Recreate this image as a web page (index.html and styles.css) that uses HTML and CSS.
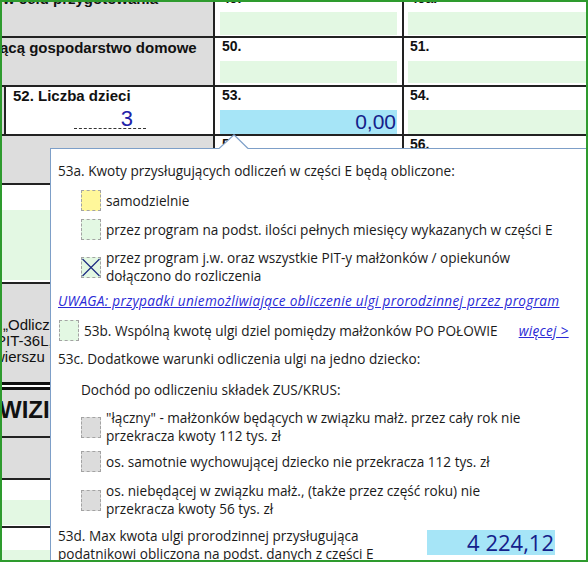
FILE: index.html
```html
<!DOCTYPE html>
<html lang="pl">
<head>
<meta charset="utf-8">
<title>PIT - ulga prorodzinna</title>
<link rel="stylesheet" href="styles.css">
</head>
<body>
<div class="page">
  <div class="sheet">
    <div class="row r1">
      <div class="c1 grey"><span class="lbl lbl-cut">w celu przygotowania</span></div>
      <div class="c2"><span class="num num-cut">49.</span><div class="fld green f1"></div></div>
      <div class="c3"><span class="num num-cut">49a.</span><div class="fld green f1"></div></div>
    </div>
    <div class="row r2">
      <div class="c1 grey"><span class="lbl lbl-2">ącą gospodarstwo domowe</span></div>
      <div class="c2"><span class="num">50.</span><div class="fld green f2"></div></div>
      <div class="c3"><span class="num">51.</span><div class="fld green f2"></div></div>
    </div>
    <div class="row r3">
      <div class="c1 side">
        <div class="kids">
          <span class="lbl">52. Liczba dzieci</span>
          <span class="kids-val">3</span>
        </div>
      </div>
      <div class="c2"><span class="num">53.</span><div class="fld blue f3">0,00</div></div>
      <div class="c3"><span class="num">54.</span><div class="fld green f3"></div></div>
    </div>
    <div class="row r4">
      <div class="c1 grey"></div>
      <div class="c2"><span class="num">55.</span></div>
      <div class="c3"><span class="num">56.</span></div>
    </div>
    <div class="strip s5"><div class="fld green f5"></div></div>
    <div class="strip s6 grey">
      <span class="note n1">„Odliczenia</span>
      <span class="note n2">PIT-36L,</span>
      <span class="note n3">wierszu</span>
    </div>
    <div class="dbl"></div>
    <div class="strip s7 grey"><span class="big">WIZI</span></div>
    <div class="strip s8 grey"></div>
    <div class="strip s9"><div class="fld green f9"></div></div>
    <div class="strip s10"><div class="fld green f10"></div></div>
  </div>

  <div class="popup">
    <svg class="arrow" width="30" height="16" viewBox="0 0 30 16">
      <polygon points="0,14.5 15,0.8 29,14.5 29,16 0,16" fill="#ffffff"/>
      <polyline points="0,14.5 15,0.8 29,14.5" fill="none" stroke="#7d9fc8" stroke-width="1.2"/>
    </svg>
    <p class="head">53a. Kwoty przysługujących odliczeń w części E będą obliczone:</p>
    <div class="opt o1"><span class="cb yellow"></span><span class="txt">samodzielnie</span></div>
    <div class="opt o2"><span class="cb mint"></span><span class="txt">przez program na podst. ilości pełnych miesięcy wykazanych w części E</span></div>
    <div class="opt o3">
      <span class="cb mint">
        <svg class="cross" width="20" height="20" viewBox="0 0 20 20"><path d="M1.5 1.5 L18.5 18.5 M18.5 1.5 L1.5 18.5" stroke="#1c2a80" stroke-width="1.2" fill="none"/></svg>
      </span>
      <span class="txt">przez program j.w. oraz wszystkie PIT-y małżonków / opiekunów<br>dołączono do rozliczenia</span>
    </div>
    <a class="link warn" href="#">UWAGA: przypadki uniemożliwiające obliczenie ulgi prorodzinnej przez program</a>
    <div class="opt o4"><span class="cb mint"></span><span class="txt">53b. Wspólną kwotę ulgi dziel pomiędzy małżonków PO POŁOWIE</span><a class="link more" href="#">więcej &gt;</a></div>
    <p class="head h53c">53c. Dodatkowe warunki odliczenia ulgi na jedno dziecko:</p>
    <p class="sub">Dochód po odliczeniu składek ZUS/KRUS:</p>
    <div class="opt o5"><span class="cb grey2"></span><span class="txt">"łączny" - małżonków będących w związku małż. przez cały rok nie<br>przekracza kwoty 112 tys. zł</span></div>
    <div class="opt o6"><span class="cb grey2"></span><span class="txt">os. samotnie wychowującej dziecko nie przekracza 112 tys. zł</span></div>
    <div class="opt o7"><span class="cb grey2"></span><span class="txt">os. niebędącej w związku małż., (także przez część roku) nie<br>przekracza kwoty 56 tys. zł</span></div>
    <div class="total">
      <p class="total-txt">53d. Max kwota ulgi prorodzinnej przysługująca<br>podatnikowi obliczona na podst. danych z części E</p>
      <div class="total-val">4 224,12</div>
    </div>
  </div>

  <div class="frame"></div>
</div>
</body>
</html>
```

FILE: styles.css
```css
* { box-sizing: border-box; }
html, body { margin: 0; padding: 0; background: #ffffff; }
body { font-family: "Liberation Sans", Arial, sans-serif; color: #111; }

.page {
  position: relative;
  width: 588px;
  height: 562px;
  overflow: hidden;
  background: #ffffff;
}

.sheet { display: flex; flex-direction: column; width: 588px; }

.row {
  display: grid;
  grid-template-columns: 215px 189px 1fr;
  border-bottom: 2px solid #222;
}
.r1 { height: 38px; }
.r2 { height: 49px; }
.r3 { height: 49px; }
.r4 { height: 49px; }

.c1, .c2, .c3 { display: flex; flex-direction: column; overflow: hidden; }
.c1, .c2 { border-right: 2px solid #222; }
.c2 { padding: 0 5px 0 5px; }
.c3 { padding: 0 0 0 4px; }

.grey { background: #dddddd; }
.green { background: #e3f8e3; }
.blue { background: #a6e5f7; }

.lbl { font-weight: bold; font-size: 15px; line-height: 18px; white-space: nowrap; }
.lbl-cut { margin-top: -10px; padding-left: 3px; }
.lbl-2 { padding-top: 1px; }
.num { font-weight: bold; font-size: 14px; line-height: 16px; padding-left: 2px; }
.num-cut { margin-top: -10px; }

.fld { width: 100%; }
.f1 { margin-top: 6px; height: 23px; }
.f2 { margin-top: 7px; height: 22px; }
.f3 {
  margin-top: 7px;
  height: 24px;
  font-size: 21px;
  line-height: 24px;
  text-align: right;
  color: #14208a;
  padding-right: 1px;
}

.side { background: #dddddd; padding-left: 4px; }
.kids {
  flex: 1;
  background: #ffffff;
  border-left: 2px solid #222;
  display: flex;
  flex-direction: column;
}
.kids .lbl { padding-left: 7px; }
.kids-val {
  margin: 4px 0 0 68px;
  width: 72px;
  height: 20px;
  border-bottom: 1px dashed #333;
  text-align: right;
  padding-right: 13px;
  font-size: 22px;
  line-height: 20px;
  color: #2222a8;
}

.strip { width: 215px; border-bottom: 2px solid #222; display: flex; flex-direction: column; overflow: hidden; }
.s5 { height: 99px; padding-top: 25px; }
.f5 { height: 70px; }
.s6 { height: 98px; padding-top: 33px; border-bottom: none; font-size: 15px; line-height: 16px; }
.note { white-space: nowrap; display: block; }
.n1 { margin-left: 3px; }
.n2 { margin-left: -4px; }
.n3 { margin-left: -6px; }
.dbl { width: 215px; height: 8px; background: #ffffff; border-top: 3px solid #111; border-bottom: 3px solid #111; }
.s7 { height: 48px; padding-top: 6px; }
.big { font-weight: bold; font-size: 24px; line-height: 28px; white-space: nowrap; margin-left: -1px; }
.s8 { height: 42px; }
.s9 { height: 48px; padding-top: 20px; }
.f9 { height: 25px; }
.s10 { height: 40px; padding-top: 22px; border-bottom: none; }
.f10 { height: 20px; }

/* popup */
.popup {
  position: absolute;
  left: 50px;
  top: 148px;
  width: 560px;
  height: 440px;
  background: #ffffff;
  border: 1px solid #7d9fc8;
  padding: 13px 0 0 7px;
  font-family: "Open Sans", "Lato", sans-serif;
  font-size: 13.6px;
  line-height: 18px;
  color: #1a1a1a;
  display: flex;
  flex-direction: column;
  align-items: flex-start;
  z-index: 2;
}
.arrow { position: absolute; left: 168px; top: -15px; }
.popup p { margin: 0; }

.opt { display: flex; align-items: center; gap: 5px; margin-left: 23px; }
.opt .txt { white-space: nowrap; }
.cb {
  width: 20px;
  height: 21px;
  border: 1px dashed #a3a3a3;
  flex: none;
  position: relative;
  display: block;
}
.yellow { background: #fff79a; }
.mint { background: #e3f8e3; }
.grey2 { background: #dcdcdc; }
.cross { position: absolute; left: -1px; top: -1px; width: 20px; height: 21px; }

.popup .o1 { margin-top: 10px; }
.popup .o2 { margin-top: 8px; }
.popup .o3 { margin-top: 9px; }
.link { color: #2a2ad6; font-style: italic; text-decoration: underline; white-space: nowrap; letter-spacing: 0.3px; }
.popup .warn { margin-top: 7px; }
.popup .o4 { margin-left: 1px; margin-top: 10px; }
.more { margin-left: 16px; }
.popup .h53c { margin-top: 9px; }
.popup .sub { margin-top: 13px; margin-left: 23px; }
.popup .o5 { margin-top: 10px; }
.popup .o6 { margin-top: 6px; }
.popup .o7 { margin-top: 10px; }

.popup .total { display: flex; margin-top: 9px; align-items: flex-start; }
.total-txt { width: 369px; white-space: nowrap; }
.total-val {
  margin-top: 3px;
  width: 128px;
  height: 25px;
  background: #a6e5f7;
  color: #14208a;
  font-size: 22px;
  line-height: 25px;
  text-align: right;
  padding-right: 1px;
  flex: none;
}

.frame {
  position: absolute;
  inset: 0;
  border: 2px solid #2e9b2e;
  pointer-events: none;
  z-index: 5;
}
```
